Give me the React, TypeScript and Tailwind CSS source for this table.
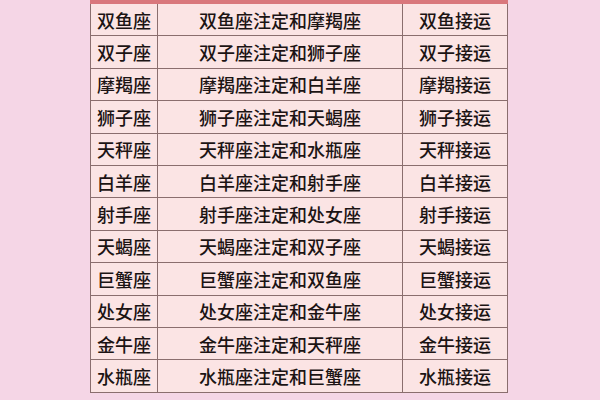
const rows: [string, string, string][] = [
  ["双鱼座", "双鱼座注定和摩羯座", "双鱼接运"],
  ["双子座", "双子座注定和狮子座", "双子接运"],
  ["摩羯座", "摩羯座注定和白羊座", "摩羯接运"],
  ["狮子座", "狮子座注定和天蝎座", "狮子接运"],
  ["天秤座", "天秤座注定和水瓶座", "天秤接运"],
  ["白羊座", "白羊座注定和射手座", "白羊接运"],
  ["射手座", "射手座注定和处女座", "射手接运"],
  ["天蝎座", "天蝎座注定和双子座", "天蝎接运"],
  ["巨蟹座", "巨蟹座注定和双鱼座", "巨蟹接运"],
  ["处女座", "处女座注定和金牛座", "处女接运"],
  ["金牛座", "金牛座注定和天秤座", "金牛接运"],
  ["水瓶座", "水瓶座注定和巨蟹座", "水瓶接运"],
];

export default function App() {
  return (
    <div
      className="w-[600px] h-[400px] bg-[#f5d6e6] overflow-hidden"
      style={{ fontFamily: '"Noto Sans CJK SC", "Noto Sans", sans-serif' }}
    >
      <div className="ml-[90px] w-[418px]">
        <div className="h-[4px] bg-[#d9777c]" />
        {rows.map(([sign, match, luck]) => (
          <div
            key={sign}
            className="grid grid-cols-[68px_245px_105px] h-[32.4px] bg-[#fbe4e4] border-b border-[#8a6e6e] text-[18px] font-medium text-[#1c1414] leading-none"
          >
            <div className="flex items-center justify-center border-l border-r border-[#8a6e6e]">
              {sign}
            </div>
            <div className="flex items-center justify-center border-r border-[#8a6e6e]">
              {match}
            </div>
            <div className="flex items-center justify-center border-r border-[#8a6e6e]">
              {luck}
            </div>
          </div>
        ))}
      </div>
    </div>
  );
}
